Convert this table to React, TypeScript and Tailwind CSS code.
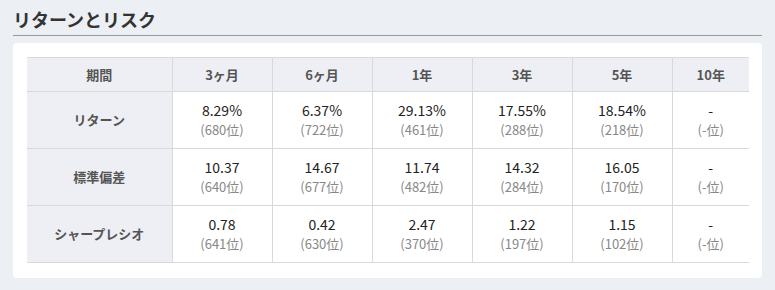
const COLS = ["期間", "3ヶ月", "6ヶ月", "1年", "3年", "5年", "10年"];

const ROWS = [
  {
    label: "リターン",
    cells: [
      ["8.29%", "680"],
      ["6.37%", "722"],
      ["29.13%", "461"],
      ["17.55%", "288"],
      ["18.54%", "218"],
      ["-", "-"],
    ],
  },
  {
    label: "標準偏差",
    cells: [
      ["10.37", "640"],
      ["14.67", "677"],
      ["11.74", "482"],
      ["14.32", "284"],
      ["16.05", "170"],
      ["-", "-"],
    ],
  },
  {
    label: "シャープレシオ",
    cells: [
      ["0.78", "641"],
      ["0.42", "630"],
      ["2.47", "370"],
      ["1.22", "197"],
      ["1.15", "102"],
      ["-", "-"],
    ],
  },
];

const App = () => {
  return (
    <div
      className="min-h-screen bg-[#eceff3] px-[13px]"
      style={{ fontFamily: '"Noto Sans CJK JP", "Noto Sans", sans-serif' }}
    >
      {/* Section title */}
      <h2 className="border-b border-[#9a9a9a] pt-[6px] pb-[3px] text-[18px] leading-[26px] font-bold text-[#333]">
        リターンとリスク
      </h2>

      <div className="mt-[7px] rounded-[4px] bg-white px-[14px] pt-[14px] pb-[15px]">
        <table className="w-[722px] table-fixed border-collapse">
          <colgroup>
            <col className="w-[145px]" />
            <col className="w-[100px]" />
            <col className="w-[100px]" />
            <col className="w-[100px]" />
            <col className="w-[100px]" />
            <col className="w-[100px]" />
            <col className="w-[77px]" />
          </colgroup>
          <thead>
            <tr className="h-[34px] border-y border-[#d9d9d9] bg-[#eeeff4]">
              {COLS.map((c, i) => (
                <th
                  key={c}
                  className={`text-center text-[13px] font-bold text-[#555] ${i > 0 ? "border-l border-[#d9d9d9]" : ""}`}
                >
                  {c}
                </th>
              ))}
            </tr>
          </thead>
          <tbody>
            {ROWS.map((row) => (
              <tr key={row.label} className="h-[57px] border-b border-[#d9d9d9]">
                <td className="bg-[#eeeff4] text-center text-[13px] font-bold text-[#555]">
                  {row.label}
                </td>
                {row.cells.map(([v, rank], i) => (
                  <td key={i} className="border-l border-[#d9d9d9] text-center">
                    <div className="text-[14px] leading-[20px] text-[#222]">{v}</div>
                    <div className="text-[13px] leading-[20px] text-[#888]">({rank}位)</div>
                  </td>
                ))}
              </tr>
            ))}
          </tbody>
        </table>
      </div>
    </div>
  );
};

export default App;
